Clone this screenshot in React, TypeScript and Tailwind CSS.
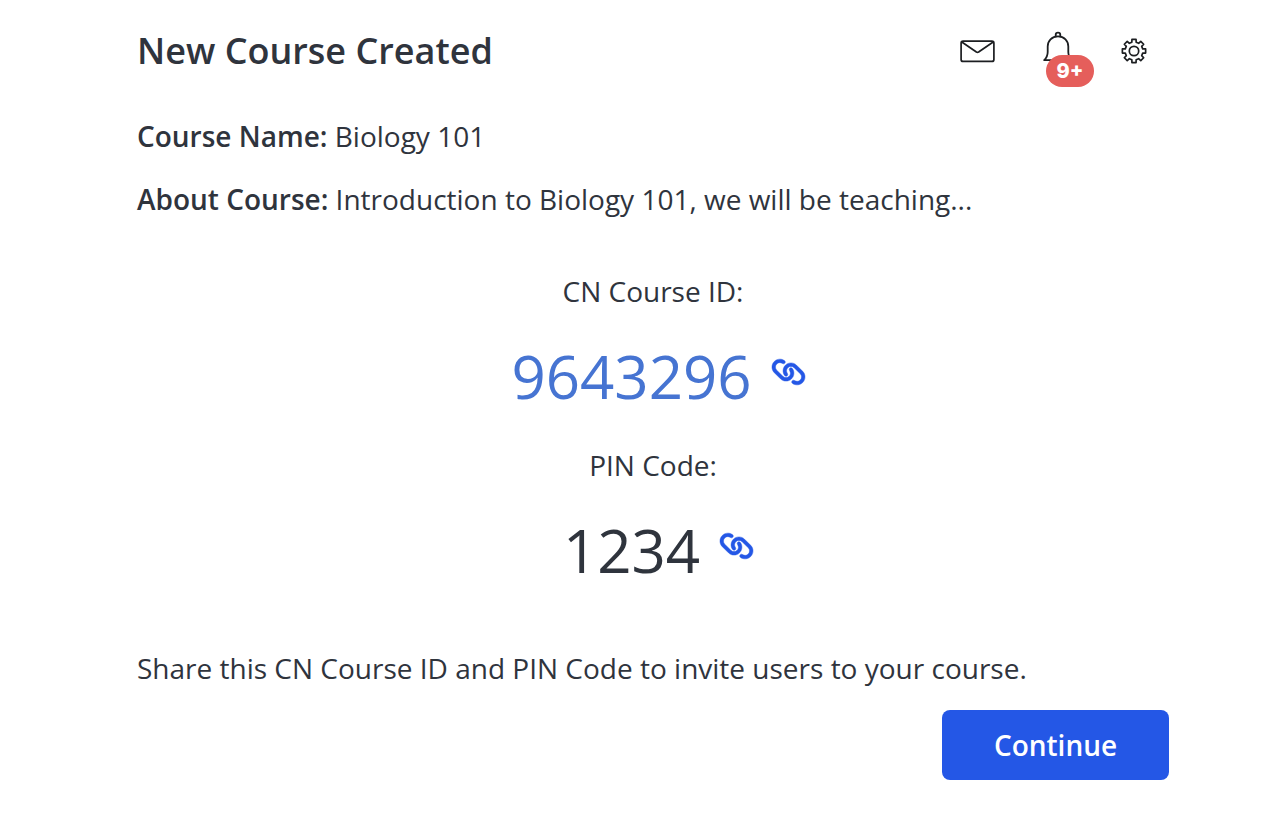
import { FaLink } from "react-icons/fa6";

const details = [
  { label: "Course Name:", value: "Biology 101" },
  { label: "About Course:", value: "Introduction to Biology 101, we will be teaching..." }
];

const codes = [
  { label: "CN Course ID:", value: "9643296", color: "text-[#4674d2]" },
  { label: "PIN Code:", value: "1234", color: "text-[#2f343d]" }
];

function MailIcon() {
  return (
    <svg width="35" height="24" viewBox="0 0 35 24" fill="none" stroke="#1c1e21" strokeWidth="1.7" strokeLinejoin="round">
      <rect x="1.1" y="2.2" width="32.8" height="20.2" rx="2" />
      <path d="M1.8 3 16.4 13q1.1.7 2.2 0L33.2 3" />
    </svg>
  );
}

function BellIcon() {
  return (
    <svg width="30" height="32" viewBox="0 0 30 32" fill="none" stroke="#1c1e21" strokeWidth="1.8" strokeLinejoin="round">
      <path d="M12.7 5.6V4a2.3 2.3 0 0 1 4.6 0v1.600" />
      <path d="M15 5.4C8.8 5.4 4.7 9.8 4.7 15.4V21c0 3.8-1.3 6-3.5 8.2h27.6c-2.2-2.2-3.5-4.4-3.5-8.2v-5.600c0-5.600-4.100-10-10.300-10Z" />
    </svg>
  );
}

// Eight teeth, each going valley -> tip -> tip -> valley
const gearPoints = Array.from({ length: 8 }, (_, i) => i * 45)
  .flatMap((angle) => [
    [angle - 14, 9],
    [angle - 10, 11.8],
    [angle + 10, 11.8],
    [angle + 14, 9]
  ])
  .map(([angle, radius]) => {
    const rad = (angle * Math.PI) / 180;
    return `${13 + radius * Math.cos(rad)},${13 + radius * Math.sin(rad)}`;
  })
  .join(" ");

function GearIcon() {
  return (
    <svg width="26" height="26" viewBox="0 0 26 26" fill="none" stroke="#1c1e21" strokeWidth="1.7" strokeLinejoin="round">
      <polygon points={gearPoints} />
      <circle cx="13" cy="13" r="4.7" />
    </svg>
  );
}

function Header() {
  return (
    <header className="flex items-center justify-between">
      <h1 className="text-4xl/[54px] font-semibold">New Course Created</h1>
      <div className="flex items-center pr-[22px]">
        <button type="button" aria-label="Messages" className="mr-12">
          <MailIcon />
        </button>
        <button type="button" aria-label="Notifications" className="relative mr-12 -mt-2">
          <BellIcon />
          <span className="absolute left-[3px] top-6 flex h-8 w-12 items-center justify-center rounded-full bg-[#e55e5b] font-['Inter',sans-serif] text-xl font-extrabold text-white">
            9+
          </span>
        </button>
        <button type="button" aria-label="Settings">
          <GearIcon />
        </button>
      </div>
    </header>
  );
}

export default function App() {
  return (
    <main className="min-h-screen bg-white pt-6 pr-[95px] pb-9 pl-[137px] font-['Open_Sans',sans-serif] text-[28px]/[42px] text-[#2f343d]">
      <Header />

      <section className="mt-[37px] flex flex-col gap-[21px]">
        {details.map((item) => (
          <p key={item.label}>
            <strong className="font-semibold">{item.label}</strong> {item.value}
          </p>
        ))}
      </section>

      <section className="mt-[50px] flex flex-col gap-[26px]">
        {codes.map((code) => (
          <div key={code.label} className="flex flex-col items-center gap-[22px]">
            <p>{code.label}</p>
            <div className="flex items-center gap-[19px] pl-[11px]">
              <span className={`text-[60px]/[84px] ${code.color}`}>{code.value}</span>
              <button type="button" aria-label={`Copy ${code.label}`} className="-mt-2 text-[#2457e6]">
                <FaLink className="h-7 w-[35px] -scale-x-100 stroke-current stroke-[8]" />
              </button>
            </div>
          </div>
        ))}
      </section>

      <p className="mt-[55px]">Share this CN Course ID and PIN Code to invite users to your course.</p>

      <div className="mt-[21px] flex justify-end">
        <button type="button" className="h-[70px] w-[227px] rounded-lg bg-[#2457e6] font-semibold text-white">
          Continue
        </button>
      </div>
    </main>
  );
}
